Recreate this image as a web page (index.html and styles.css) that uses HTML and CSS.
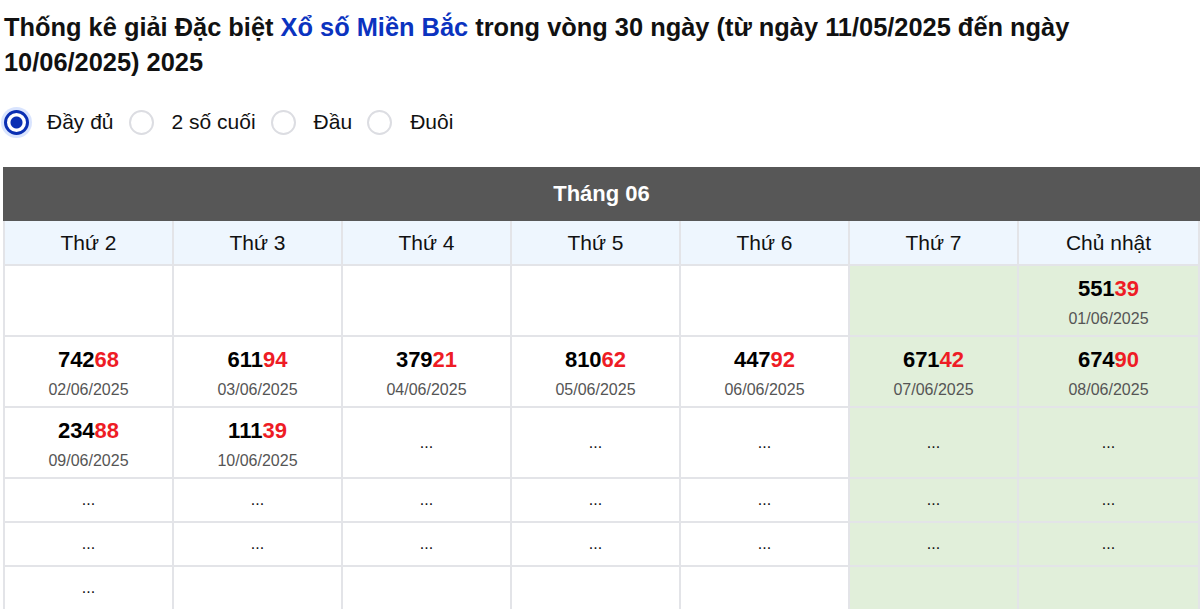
FILE: index.html
```html
<!DOCTYPE html>
<html lang="vi">
<head>
<meta charset="utf-8">
<title>Thống kê giải Đặc biệt</title>
<link rel="stylesheet" href="styles.css">
</head>
<body>
<div class="page">
  <h1 class="title">Thống kê giải Đặc biệt <span class="link">Xổ số Miền Bắc</span> trong vòng 30 ngày (từ ngày 11/05/2025 đến ngày 10/06/2025) 2025</h1>
  <div class="options">
    <label class="opt"><input type="radio" name="mode" checked><span>Đầy đủ</span></label>
    <label class="opt"><input type="radio" name="mode"><span>2 số cuối</span></label>
    <label class="opt"><input type="radio" name="mode"><span>Đầu</span></label>
    <label class="opt"><input type="radio" name="mode"><span>Đuôi</span></label>
  </div>
  <table class="cal">
    <colgroup>
      <col class="c"><col class="c"><col class="c"><col class="c"><col class="c"><col class="c"><col>
    </colgroup>
    <thead>
      <tr><th colspan="7" class="month">Tháng 06</th></tr>
      <tr class="days"><th>Thứ 2</th><th>Thứ 3</th><th>Thứ 4</th><th>Thứ 5</th><th>Thứ 6</th><th>Thứ 7</th><th>Chủ nhật</th></tr>
    </thead>
    <tbody>
      <tr class="big">
        <td></td><td></td><td></td><td></td><td></td><td class="we"></td>
        <td class="we"><div class="num">551<b>39</b></div><div class="date">01/06/2025</div></td>
      </tr>
      <tr class="big">
        <td><div class="num">742<b>68</b></div><div class="date">02/06/2025</div></td>
        <td><div class="num">611<b>94</b></div><div class="date">03/06/2025</div></td>
        <td><div class="num">379<b>21</b></div><div class="date">04/06/2025</div></td>
        <td><div class="num">810<b>62</b></div><div class="date">05/06/2025</div></td>
        <td><div class="num">447<b>92</b></div><div class="date">06/06/2025</div></td>
        <td class="we"><div class="num">671<b>42</b></div><div class="date">07/06/2025</div></td>
        <td class="we"><div class="num">674<b>90</b></div><div class="date">08/06/2025</div></td>
      </tr>
      <tr class="big">
        <td><div class="num">234<b>88</b></div><div class="date">09/06/2025</div></td>
        <td><div class="num">111<b>39</b></div><div class="date">10/06/2025</div></td>
        <td class="dots">...</td><td class="dots">...</td><td class="dots">...</td><td class="dots we">...</td><td class="dots we">...</td>
      </tr>
      <tr class="small">
        <td class="dots">...</td><td class="dots">...</td><td class="dots">...</td><td class="dots">...</td><td class="dots">...</td><td class="dots we">...</td><td class="dots we">...</td>
      </tr>
      <tr class="small">
        <td class="dots">...</td><td class="dots">...</td><td class="dots">...</td><td class="dots">...</td><td class="dots">...</td><td class="dots we">...</td><td class="dots we">...</td>
      </tr>
      <tr class="small">
        <td class="dots">...</td><td></td><td></td><td></td><td></td><td class="we"></td><td class="we"></td>
      </tr>
    </tbody>
  </table>
</div>
</body>
</html>
```

FILE: styles.css
```css
html, body {
  margin: 0;
  padding: 0;
  background: #fff;
}
body {
  font-family: "Liberation Sans", Arial, sans-serif;
  color: #111;
}
.page {
  padding: 0 0 0 3px;
}
.title {
  margin: 10px 0 0 1px;
  padding-right: 12px;
  font-size: 25.4px;
  line-height: 35px;
  font-weight: bold;
  color: #111;
}
.link {
  color: #0b33bf;
}
.options {
  display: flex;
  align-items: center;
  margin-top: 27px;
  height: 30px;
}
.opt {
  display: flex;
  align-items: center;
  font-size: 21px;
  color: #111;
  margin-right: 14px;
}
.opt input {
  appearance: none;
  -webkit-appearance: none;
  margin: 0 18px 0 1px;
  width: 25px;
  height: 25px;
  border-radius: 50%;
  border: 2px solid #dcdde2;
  background: #fff;
  box-sizing: border-box;
}
.opt input:checked {
  border: 3px solid #0a2fb3;
  background: radial-gradient(circle, #0a2fb3 0 5.5px, #fff 6.5px);
  box-shadow: 0 0 0 3px rgba(80, 130, 250, 0.22);
}
.cal {
  margin-top: 30px;
  width: 1197px;
  border-collapse: collapse;
  table-layout: fixed;
}
.cal col.c {
  width: 169px;
}
.cal th, .cal td {
  border: 2px solid #e3e4e8;
  text-align: center;
  vertical-align: middle;
  padding: 0;
}
.month {
  background: #575757;
  color: #fff;
  font-size: 22px;
  font-weight: bold;
  height: 50px;
  border-color: #575757 !important;
}
.days th {
  background: #eef6fe;
  font-weight: normal;
  font-size: 21px;
  height: 43px;
  color: #111;
}
.big td {
  height: 69px;
}
.small td {
  height: 42px;
}
.we {
  background: #e1efda;
}
.num {
  margin-top: 4px;
  font-size: 22px;
  font-weight: bold;
  line-height: 32px;
  color: #000;
}
.num b {
  color: #ee1c25;
}
.date {
  font-size: 16px;
  line-height: 28px;
  color: #555;
}
.dots {
  font-size: 16px;
  color: #111;
}
```
